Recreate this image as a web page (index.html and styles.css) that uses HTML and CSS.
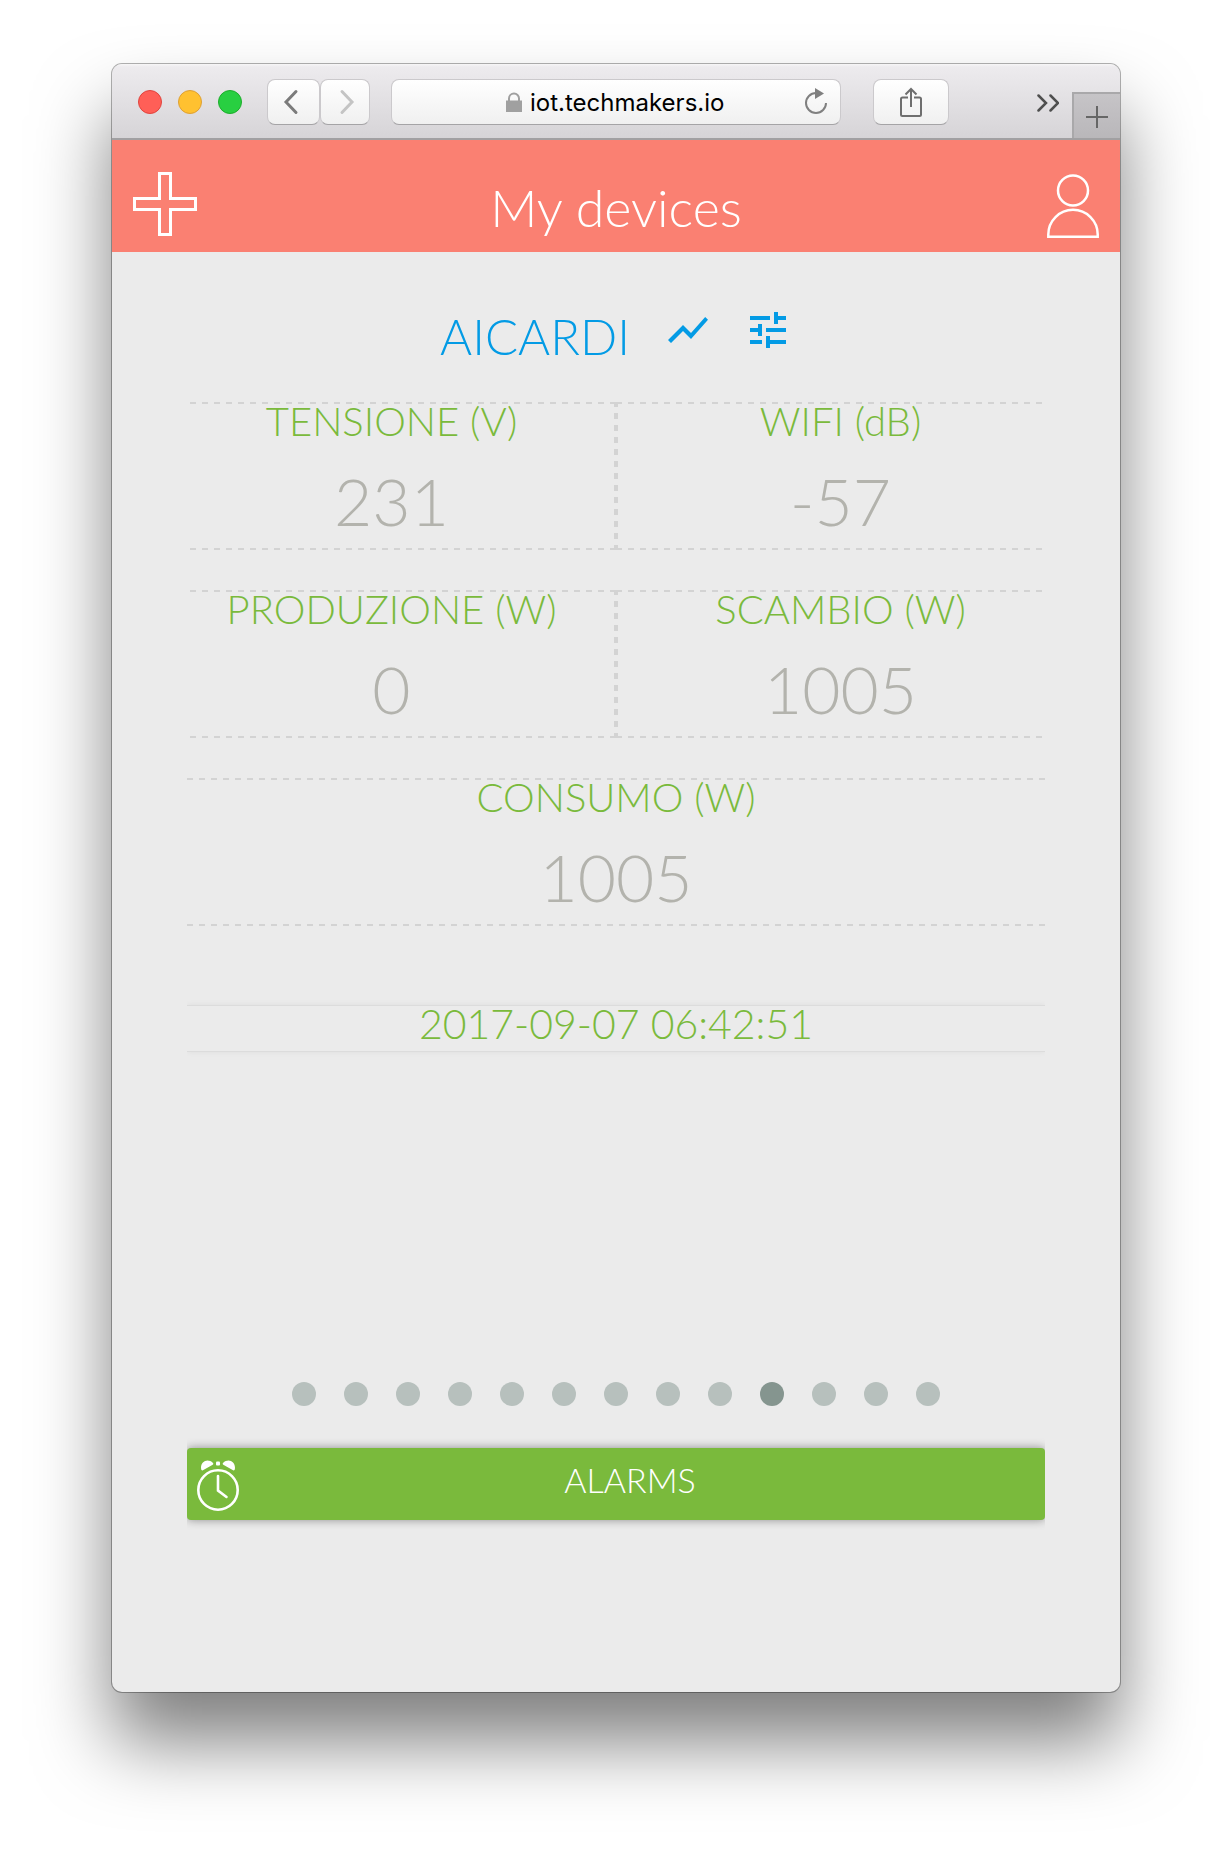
FILE: index.html
```html
<!DOCTYPE html>
<html lang="en">
<head>
<meta charset="utf-8">
<meta name="viewport" content="width=device-width, initial-scale=1">
<title>My devices</title>
<link rel="stylesheet" href="styles.css">
</head>
<body>
<div class="window">
  <div class="toolbar">
    <div class="lights">
      <button class="light light-close" aria-label="Close"></button>
      <button class="light light-minimize" aria-label="Minimize"></button>
      <button class="light light-zoom" aria-label="Zoom"></button>
    </div>
    <div class="history">
      <button class="tool tool-back" aria-label="Back">
        <svg width="16" height="26" viewBox="0 0 16 26"><path d="M13 2.500L3 13l10 10.500" fill="none" stroke="#7b7b7b" stroke-width="3" stroke-linecap="round"/></svg>
      </button>
      <button class="tool tool-forward" aria-label="Forward">
        <svg width="16" height="26" viewBox="0 0 16 26"><path d="M3 2.500L13 13 3 23.500" fill="none" stroke="#c4c4c4" stroke-width="3" stroke-linecap="round"/></svg>
      </button>
    </div>
    <div class="address">
      <label class="location">
        <svg width="16" height="20" viewBox="0 0 16 20" aria-hidden="true"><path d="M0 8.500h16V20H0z" fill="#a0a0a0"/><path d="M3 9V6.500a5 5 0 0 1 10 0V9" fill="none" stroke="#a0a0a0" stroke-width="2"/></svg>
        <input class="url" type="text" value="iot.techmakers.io" aria-label="Address">
      </label>
      <button class="reload" aria-label="Reload">
        <svg width="24" height="28" viewBox="0 0 24 28"><path d="M12 6A10 10 0 1 0 22 16" fill="none" stroke="#808080" stroke-width="2"/><path d="M11 1l9 5.500-9 5.500z" fill="#808080"/></svg>
      </button>
    </div>
    <button class="tool tool-share" aria-label="Share">
      <svg width="22" height="30" viewBox="0 0 22 30"><g fill="none" stroke="#6f6f6f" stroke-width="2"><path d="M8 10.500H2.500A1.500 1.500 0 0 0 1 12v15.500A1.500 1.500 0 0 0 2.500 29h17a1.500 1.500 0 0 0 1.500-1.500V12a1.500 1.500 0 0 0-1.500-1.500H14M11 20V2M5.500 7.500L11 2l5.500 5.500"/></g></svg>
    </button>
    <button class="more" aria-label="More">
      <svg width="22" height="18" viewBox="0 0 22 18"><path d="M1.500 1.500L9 9l-7.500 7.500M13.500 1.500L21 9l-7.500 7.500" fill="none" stroke="#4f4f4f" stroke-width="2.500" stroke-linecap="round"/></svg>
    </button>
    <button class="new-tab" aria-label="New tab">
      <svg width="22" height="22" viewBox="0 0 22 22"><path d="M11 0v22M0 11h22" stroke="#666" stroke-width="2"/></svg>
    </button>
  </div>

  <header class="app-bar">
    <button class="bar-button" aria-label="Add device">
      <svg width="64" height="64" viewBox="0 0 64 64"><path d="M26.500 1.500h11v25h25v11h-25v25h-11v-25h-25v-11h25z" fill="none" stroke="#fff" stroke-width="3"/></svg>
    </button>
    <h1 class="app-title">My devices</h1>
    <button class="bar-button bar-button-end" aria-label="Account">
      <svg width="52" height="66" viewBox="0 0 52 66"><g fill="none" stroke="#fff" stroke-width="2.500"><circle cx="26" cy="18.500" r="15"/><path d="M1.300 64.700v-2.200a24.700 24.700 0 0 1 49.400 0v2.200z"/></g></svg>
    </button>
  </header>

  <main class="content">
    <div class="device">
      <h2 class="device-name">AICARDI</h2>
      <div class="device-actions">
        <a class="device-link" href="#chart" aria-label="Chart"><svg width="48" height="48" viewBox="0 0 24 24"><path fill="currentColor" d="M3.500 18.490l6-6.010 4 4L22 6.920l-1.410-1.410-7.090 7.970-4-4L2 16.990z"/></svg></a>
        <a class="device-link" href="#settings" aria-label="Settings"><svg width="48" height="48" viewBox="0 0 24 24"><path fill="currentColor" d="M3 17v2h6v-2H3zM3 5v2h10V5H3zm10 16v-2h8v-2h-8v-2h-2v6h2zM7 9v2H3v2h4v2h2V9H7zm14 4v-2H11v2h10zm-6-4h2V7h4V5h-4V3h-2v6z"/></svg></a>
      </div>
    </div>

    <div class="readings">
      <dl class="row row-split">
        <div class="cell"><dt class="label">TENSIONE (V)</dt><dd class="value">231</dd></div>
        <div class="cell"><dt class="label">WIFI (dB)</dt><dd class="value">-57</dd></div>
      </dl>
      <dl class="row row-split">
        <div class="cell"><dt class="label">PRODUZIONE (W)</dt><dd class="value">0</dd></div>
        <div class="cell"><dt class="label">SCAMBIO (W)</dt><dd class="value">1005</dd></div>
      </dl>
      <dl class="row">
        <div class="cell"><dt class="label">CONSUMO (W)</dt><dd class="value">1005</dd></div>
      </dl>
    </div>

    <time class="updated" datetime="2017-09-07T06:42:51">2017-09-07 06:42:51</time>

    <nav class="pager" aria-label="Devices">
      <button class="dot" aria-label="Device 1"></button>
      <button class="dot" aria-label="Device 2"></button>
      <button class="dot" aria-label="Device 3"></button>
      <button class="dot" aria-label="Device 4"></button>
      <button class="dot" aria-label="Device 5"></button>
      <button class="dot" aria-label="Device 6"></button>
      <button class="dot" aria-label="Device 7"></button>
      <button class="dot" aria-label="Device 8"></button>
      <button class="dot" aria-label="Device 9"></button>
      <button class="dot dot-active" aria-label="Device 10" aria-current="true"></button>
      <button class="dot" aria-label="Device 11"></button>
      <button class="dot" aria-label="Device 12"></button>
      <button class="dot" aria-label="Device 13"></button>
    </nav>

    <button class="alarms">
      <svg width="42" height="52" viewBox="0 0 42 52" aria-hidden="true"><g fill="none" stroke="#fff"><circle cx="21" cy="30" r="19.700" stroke-width="2.600"/><path d="M21 16v14.500l8.500 6.500" stroke-width="2.600" stroke-linecap="round"/></g><g fill="#fff"><path d="M5.500 10.500Q4 10.500 4 8C4 1 11-2 16 3q.8 1-.3 1.700zM36.500 10.500Q38 10.500 38 8C38 1 31-2 26 3q-.8 1 .3 1.700z"/><rect x="19" y="1.500" width="4" height="4" rx="1"/></g></svg>
      <span class="alarms-text">ALARMS</span>
    </button>
  </main>
</div>
</body>
</html>
```
FILE: styles.css
```css
* {
  box-sizing: border-box;
}

body {
  margin: 0;
  padding: 64px 112px 160px;
  background: #fff;
  font-family: Lato, "Open Sans", sans-serif;
  font-weight: 300;
}

button {
  margin: 0;
  padding: 0;
  border: 0;
  background: none;
  font: inherit;
  color: inherit;
  cursor: pointer;
}

svg {
  display: block;
}

.window {
  overflow: hidden;
  border-radius: 10px;
  background: #ebebeb;
  box-shadow: 0 0 0 1px rgba(0, 0, 0, 0.3), 0 50px 76px rgba(0, 0, 0, 0.5);
}

/* Browser toolbar */
.toolbar {
  display: flex;
  align-items: flex-start;
  height: 76px;
  padding-left: 26px;
  border-bottom: 2px solid #a1a0a2;
  background: linear-gradient(#f7f6f7, #edebee 3px, #d6d4d7);
}

.lights {
  display: flex;
  gap: 16px;
  margin: 26px 25px 0 0;
}

.light {
  width: 24px;
  height: 24px;
  border-radius: 50%;
}

.light-close {
  border: 1px solid #e0443e;
  background: #ff5f57;
}

.light-minimize {
  border: 1px solid #dea034;
  background: #ffc130;
}

.light-zoom {
  border: 1px solid #1dad2b;
  background: #28cf41;
}

.history {
  display: flex;
  margin: 15px 21px 0 0;
}

.tool,
.address {
  display: flex;
  align-items: center;
  justify-content: center;
  height: 46px;
  border: 1px solid #cbc9cc;
  border-bottom-color: #a5a4a6;
  border-radius: 8px;
  background: linear-gradient(#fff, #f0f0f0);
}

.tool-back {
  width: 53px;
  padding-right: 6px;
}

.tool-forward {
  width: 50px;
  padding-left: 4px;
}

.address {
  position: relative;
  flex: 1;
  min-width: 0;
  margin-top: 15px;
}

.location {
  display: flex;
  align-items: center;
  gap: 8px;
}

.url {
  width: 196px;
  padding: 2px 0 0;
  border: 0;
  background: none;
  color: #000;
  font: 400 24px/32px Inter, "Liberation Sans", sans-serif;
}

.reload {
  position: absolute;
  right: 12px;
  top: 7px;
}

.tool-share {
  width: 76px;
  margin: 15px 88px 0 32px;
}

.more {
  margin: 30px 13px 0 0;
}

.new-tab {
  display: flex;
  align-items: center;
  justify-content: center;
  align-self: flex-end;
  width: 48px;
  height: 46px;
  padding-top: 2px;
  border: solid #a9a8aa;
  border-width: 2px 0 0 2px;
  background: linear-gradient(#c6c4c7, #b9b7ba);
}

/* Application header */
.app-bar {
  display: grid;
  grid-template-columns: 1fr auto 1fr;
  align-items: start;
  height: 112px;
  padding: 32px 21px 0;
  background: #fa8072;
  color: #fff;
}

.bar-button {
  justify-self: start;
}

.bar-button-end {
  justify-self: end;
}

.app-title {
  margin: 0;
  font-size: 52px;
  font-weight: 300;
  line-height: 70px;
}

/* Device page */
.content {
  display: flex;
  flex-direction: column;
  padding: 54px 75px 172px;
}

.device {
  display: flex;
  justify-content: center;
  gap: 34px;
  margin: 0 0 36px;
  color: #039be5;
}

.device-name {
  margin: 0;
  font-size: 49px;
  font-weight: 300;
  line-height: 60px;
}

.device-actions {
  display: flex;
  gap: 32px;
}

.device-link {
  color: inherit;
}

.readings {
  display: grid;
  gap: 40px;
}

.row {
  display: grid;
  margin: 0;
  padding: 2px 0;
  background:
    repeating-linear-gradient(90deg, #d3d3d3 0 6px, transparent 6px 12px) top / 100% 2px no-repeat,
    repeating-linear-gradient(90deg, #d3d3d3 0 6px, transparent 6px 12px) bottom / 100% 2px no-repeat;
}

/* Dashes run from both outer edges and meet at the divider */
.row-split {
  grid-template-columns: 1fr 1fr;
  column-gap: 46px;
  margin: 0 3px;
  background:
    repeating-linear-gradient(90deg, #d3d3d3 0 6px, transparent 6px 12px) left top / 50% 2px no-repeat,
    repeating-linear-gradient(270deg, #d3d3d3 0 6px, transparent 6px 12px) right top / 50% 2px no-repeat,
    repeating-linear-gradient(90deg, #d3d3d3 0 6px, transparent 6px 12px) left bottom / 50% 2px no-repeat,
    repeating-linear-gradient(270deg, #d3d3d3 0 6px, transparent 6px 12px) right bottom / 50% 2px no-repeat,
    repeating-linear-gradient(#d3d3d3 0 5px, transparent 5px 11px, #d3d3d3 11px 12px) top / 4px 100% no-repeat;
}

.cell {
  text-align: center;
}

.label {
  color: #7aba3c;
  font-size: 40px;
  line-height: 34px;
}

.value {
  margin: 0;
  padding-top: 16px;
  color: #b3b3ad;
  font-size: 66px;
  line-height: 94px;
}

.updated {
  display: block;
  margin-top: 79px;
  padding-bottom: 9px;
  border: solid #dcdcdc;
  border-width: 1px 0;
  color: #7aba3c;
  font-size: 41px;
  line-height: 36px;
  text-align: center;
  box-shadow: 0 0 6px rgba(0, 0, 0, 0.06);
  clip-path: inset(-6px 0);
}

.pager {
  display: flex;
  justify-content: center;
  gap: 28px;
  margin: 330px 0 42px;
}

.dot {
  width: 24px;
  height: 24px;
  border-radius: 50%;
  background: #b7c0bd;
}

.dot-active {
  background: #85958f;
}

.alarms {
  display: flex;
  align-items: flex-start;
  height: 72px;
  padding: 12px 24px 0 10px;
  border-radius: 4px;
  background: #7aba3c;
  color: #fff;
  box-shadow: 0 0 10px rgba(0, 0, 0, 0.4);
  clip-path: inset(-12px 0);
}

.alarms-text {
  flex: 1;
  font-size: 34px;
  line-height: 40px;
}
```
